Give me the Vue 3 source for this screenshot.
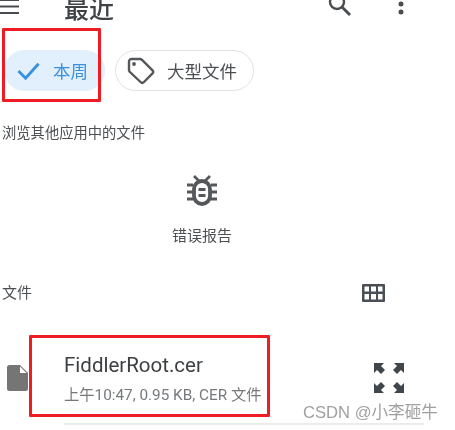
<script setup>
const fileName = 'FiddlerRoot.cer'
const fileMeta = '上午10:47, 0.95 KB, CER 文件'
</script>

<template>
  <div class="page">
    <header class="top">
      <svg class="menu" width="20" height="18" viewBox="0 0 20 18">
        <path d="M0 1h19M0 7.500h19M0 14h19" stroke="#4a4d50" stroke-width="2.200" fill="none" />
      </svg>
      <h1>最近</h1>
      <svg class="search" width="26" height="26" viewBox="0 0 26 26">
        <circle cx="10" cy="9" r="7" fill="none" stroke="#4a4d50" stroke-width="2.400" />
        <path d="M15 14l8 8" stroke="#4a4d50" stroke-width="2.800" fill="none" />
      </svg>
      <svg class="more" width="8" height="22" viewBox="0 0 8 22">
        <circle cx="4" cy="2" r="2.500" fill="#4a4d50" />
        <circle cx="4" cy="9" r="2.500" fill="#4a4d50" />
        <circle cx="4" cy="17" r="2.500" fill="#4a4d50" />
      </svg>
    </header>

    <div class="chips">
      <div class="chip active">
        <svg width="24" height="18" viewBox="0 0 24 18">
          <path d="M1.500 9l7.500 7.500L22.500 1.500" fill="none" stroke="#3a90e0" stroke-width="3" />
        </svg>
        <span>本周</span>
      </div>
      <div class="chip">
        <svg width="28" height="28" viewBox="0 0 28 28">
          <path d="M2 4.500A2.500 2.500 0 0 1 4.500 2h8.500c.7 0 1.300.3 1.800.7l10.500 10.500c1 1 1 2.500 0 3.500l-8.300 8.300c-1 1-2.500 1-3.500 0L2.700 14.800c-.4-.5-.7-1.100-.7-1.800z" fill="none" stroke="#55585b" stroke-width="2.400" />
          <circle cx="7" cy="7" r="1.900" fill="#55585b" />
        </svg>
        <span>大型文件</span>
      </div>
    </div>

    <p class="section-title">浏览其他应用中的文件</p>

    <div class="app-tile">
      <svg width="30" height="32" viewBox="0 0 30 32">
        <path d="M7 1l5 5M23 1l-5 5" stroke="#55585b" stroke-width="2.800" fill="none" />
        <path d="M0 10h6M24 10h6M0 17h6M24 17h6M0 24h6M24 24h6" stroke="#55585b" stroke-width="3.200" fill="none" />
        <rect x="7" y="6" width="16" height="23" rx="8" fill="none" stroke="#55585b" stroke-width="3.800" />
        <path d="M11.500 14.500h7M11.500 20.500h7" stroke="#55585b" stroke-width="2.800" fill="none" />
      </svg>
      <span>错误报告</span>
    </div>

    <div class="files-head">
      <span>文件</span>
      <svg width="23" height="18" viewBox="0 0 23 18">
        <path fill-rule="evenodd" fill="#4a4f55" d="M0 1a1 1 0 0 1 1-1h21a1 1 0 0 1 1 1v16a1 1 0 0 1-1 1H1a1 1 0 0 1-1-1zM2.500 2.500v5h4.500v-5zM9 2.500v5h5v-5zM16 2.500v5h4.500v-5zM2.500 10v5.500h4.500V10zM9 10v5.500h5V10zM16 10v5.500h4.500V10z" />
      </svg>
    </div>

    <div class="file-row">
      <svg class="file-icon" width="21" height="26" viewBox="0 0 21 26">
        <path fill="#757575" d="M2.500 0H13l8 8v15.500a2.500 2.500 0 0 1-2.500 2.500h-16A2.500 2.500 0 0 1 0 23.500v-21A2.500 2.500 0 0 1 2.500 0z" />
        <path fill="#fff" d="M13 1.500V8h6.500z" />
      </svg>
      <div class="file-info">
        <div class="file-name">{{ fileName }}</div>
        <div class="file-meta">{{ fileMeta }}</div>
      </div>
      <svg class="expand" width="30" height="30" viewBox="0 0 30 30">
        <path fill="#3f464c" d="M0 0h10l-3 3 4 4-4 4-4-4-3 3zM30 0v10l-3-3-4 4-4-4 4-4-3-3zM0 30V20l3 3 4-4 4 4-4 4 3 3zM30 30H20l3-3-4-4 4-4 4 4 3-3z" />
      </svg>
    </div>
    <div class="divider"></div>

    <div class="mark mark-chip"></div>
    <div class="mark mark-file"></div>
    <div class="watermark">CSDN @小李砸牛</div>
  </div>
</template>

<style scoped>
.page {
  position: relative;
  width: 455px;
  height: 430px;
  overflow: hidden;
  background: #fff;
  font-family: Roboto, "Noto Sans CJK SC", sans-serif;
  color: #4d5053;
  filter: blur(0.35px);
}
.top {
  display: flex;
  align-items: center;
  height: 40px;
  margin-top: -10px;
  padding: 0 50px 0 0;
}
.menu {
  margin-top: -5px;
}
h1 {
  margin: 0 0 0 44px;
  flex: 1;
  font-size: 25px;
  font-weight: 500;
  line-height: 40px;
  color: #404346;
}
.search {
  margin: -8px 44px 0 0;
}
.more {
  margin-top: -8px;
}
.chips {
  display: flex;
  gap: 10px;
  margin: 20px 0 0 4px;
}
.chip {
  display: flex;
  align-items: center;
  height: 41px;
  padding: 0 16px 0 11px;
  border: 1px solid #e2e2e2;
  border-radius: 21px;
  box-sizing: border-box;
  font-size: 17.500px;
  white-space: nowrap;
  gap: 12px;
}
.chip.active {
  width: 101px;
  padding-left: 12px;
  border-color: #e1f0fc;
  background: #e1f0fc;
  color: #3a90e0;
  gap: 13px;
}
.section-title {
  margin: 33px 0 0 2px;
  font-size: 14.300px;
  line-height: 18px;
}
.app-tile {
  display: flex;
  flex-direction: column;
  align-items: center;
  gap: 20px;
  width: 120px;
  margin: 33px 0 0 142px;
  font-size: 15px;
  line-height: 18px;
}
.files-head {
  display: flex;
  align-items: center;
  justify-content: space-between;
  margin: 38px 70px 0 2px;
  font-size: 15px;
  line-height: 20px;
}
.file-row {
  display: flex;
  align-items: center;
  margin: 49px 51px 0 7px;
}
.file-icon,
.expand {
  margin-top: -1px;
}
.file-info {
  flex: 1;
  margin-left: 36px;
}
.file-name {
  font-size: 20.500px;
  line-height: 26px;
  color: #3d4043;
}
.file-meta {
  margin-top: 8px;
  font-size: 15.300px;
  line-height: 18px;
  color: #76797c;
}
.divider {
  height: 2px;
  margin: 19px 31px 0 64px;
  background: #ebebeb;
}
.mark {
  position: absolute;
  box-sizing: border-box;
  border: 3px solid #ee1c25;
  border-radius: 1px;
}
.mark-chip {
  left: 2px;
  top: 28px;
  width: 99px;
  height: 74px;
}
.mark-file {
  left: 29px;
  top: 335px;
  width: 241px;
  height: 82px;
}
.watermark {
  position: absolute;
  left: 303px;
  top: 403px;
  font-family: "Liberation Sans", "Noto Sans CJK SC", sans-serif;
  font-size: 16.600px;
  line-height: 20px;
  color: #a0a0a0;
  white-space: nowrap;
}
</style>
